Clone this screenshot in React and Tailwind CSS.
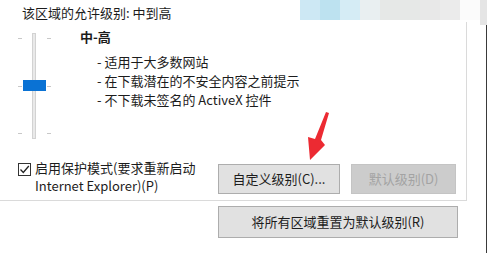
import React from "react";

const FONT = { fontFamily: '"Noto Sans CJK SC", "Microsoft YaHei", sans-serif' };

function Slider() {
  return (
    <div className="relative w-[34px] h-[106px] ml-[18px] mt-[11px]">
      {/* track */}
      <div className="absolute left-[14px] top-0 w-[4px] h-[106px] bg-[#e9e9e9] border border-[#d2d2d2]" />
      {/* ticks */}
      <div className="absolute left-0 top-[5px] w-[4px] h-px bg-[#c8c8c8]" />
      <div className="absolute left-[29px] top-[5px] w-[4px] h-px bg-[#c8c8c8]" />
      <div className="absolute left-0 top-[53px] w-[4px] h-px bg-[#c8c8c8]" />
      <div className="absolute left-[29px] top-[53px] w-[4px] h-px bg-[#c8c8c8]" />
      <div className="absolute left-0 top-[100px] w-[4px] h-px bg-[#c8c8c8]" />
      <div className="absolute left-[29px] top-[100px] w-[4px] h-px bg-[#c8c8c8]" />
      {/* thumb */}
      <div className="absolute left-[5px] top-[47px] w-[23px] h-[11px] bg-[#0a72d4]" />
    </div>
  );
}

function Arrow() {
  return (
    <svg className="absolute left-[300px] top-[105px]" width="35" height="60" viewBox="300 105 35 60">
      <polygon
        points="326,112 329,113 321,140 325,145 310,160 308,137 315,139"
        fill="#ec2a32"
      />
    </svg>
  );
}

function Checkbox() {
  return (
    <div className="w-[13px] h-[13px] border border-[#333] bg-white flex items-center justify-center shrink-0">
      <svg width="11" height="11" viewBox="0 0 11 11">
        <path d="M1.5 5.5 L4.3 8.5 L9.8 2" fill="none" stroke="#222" strokeWidth="1.3" />
      </svg>
    </div>
  );
}

export default function App() {
  return (
    <div
      className="relative w-[487px] h-[253px] bg-white overflow-hidden flex text-[13px] text-[#1c1c1c]"
      style={FONT}
    >
      {/* main column */}
      <div className="w-[480px] flex flex-col">
        {/* header row */}
        <div className="h-[22px] flex items-start">
          <div className="w-[300px] pl-[22px] pt-[3px] leading-[19px]">该区域的允许级别: 中到高</div>
          <div className="flex h-[20px]">
            <div className="w-[20px] bg-[#cde8f4]" />
            <div className="w-[20px] bg-[#bde2f0]" />
            <div className="w-[20px] bg-[#d5ecf5]" />
            <div className="w-[20px] bg-[#e9eff1]" />
            <div className="w-[40px] bg-[#e6e8e7]" />
            <div className="w-[20px] bg-[#e8e8e8]" />
            <div className="w-[20px] bg-[#ebebeb]" />
            <div className="w-[20px] bg-[#fbfbfb]" />
          </div>
        </div>

        {/* group panel */}
        <div className="w-[467px] h-[179px] border-r border-b border-[#dadada] flex flex-col">
          <div className="h-[137px] flex">
            <Slider />
            <div className="ml-[28px] mt-[5px] leading-[19px]">
              <div className="font-bold">中-高</div>
              <div className="ml-[17px] mt-[6px]">
                <div>- 适用于大多数网站</div>
                <div>- 在下载潜在的不安全内容之前提示</div>
                <div>- 不下载未签名的 ActiveX 控件</div>
              </div>
            </div>
          </div>
          <div className="flex">
            <div className="w-[218px] flex pl-[18px] leading-[18px]">
              <div className="pt-[4px]">
                <Checkbox />
              </div>
              <div className="ml-[4px]">
                <div>启用保护模式(要求重新启动</div>
                <div>Internet Explorer)(P)</div>
              </div>
            </div>
            <div className="flex gap-[11px] mt-[5px]">
              <div className="w-[122px] h-[30px] bg-[#e1e1e1] border border-[#adadad] flex items-center justify-center">
                自定义级别(C)...
              </div>
              <div className="w-[105px] h-[30px] bg-[#cccccc] border border-[#c4c4c4] text-[#a3a3a3] flex items-center justify-center">
                默认级别(D)
              </div>
            </div>
          </div>
        </div>

        {/* reset button */}
        <div className="ml-[218px] mt-[5px] w-[240px] h-[32px] bg-[#e1e1e1] border border-[#adadad] flex items-center justify-center">
          将所有区域重置为默认级别(R)
        </div>
      </div>

      {/* right edge */}
      <div className="w-[7px] flex flex-col">
        <div className="h-[25px] bg-[#e5e5e5]" />
        <div className="flex-1 border-r border-[#3a3a3a]" />
      </div>

      <Arrow />
    </div>
  );
}
